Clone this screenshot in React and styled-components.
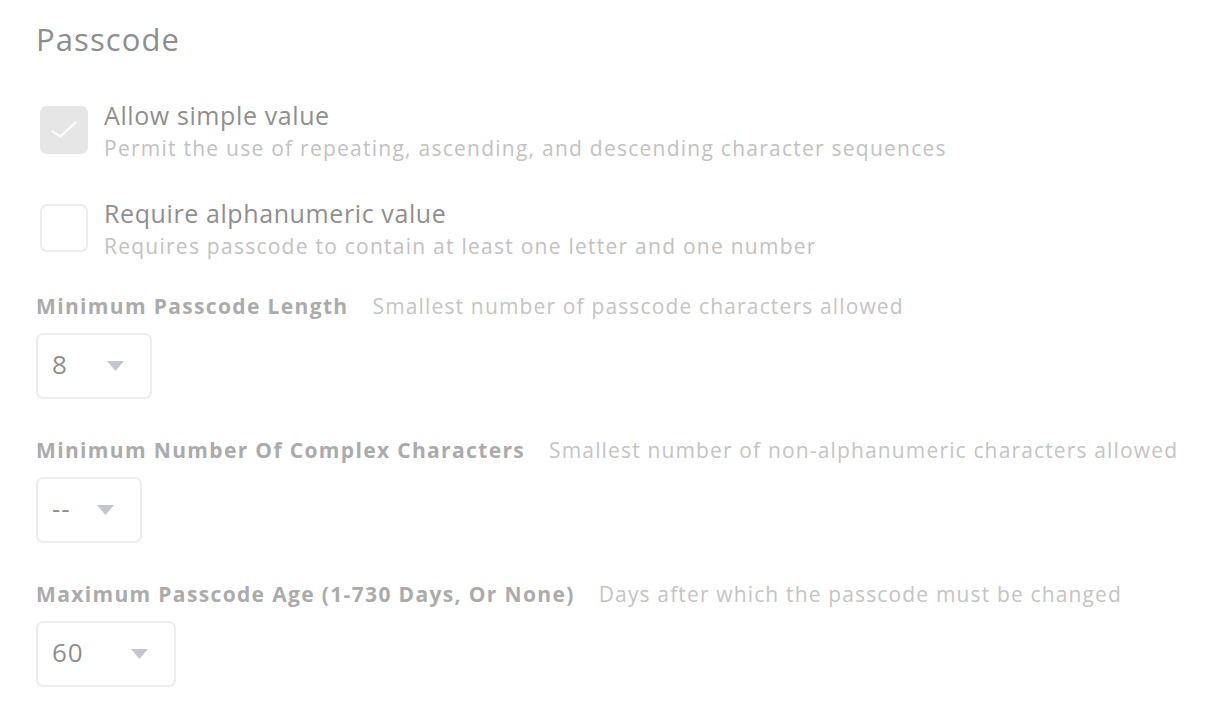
import React from 'react';
import styled, { createGlobalStyle } from 'styled-components';

const GlobalStyle = createGlobalStyle`
    body {
        margin: 0;
        background: #ffffff;
        font-family: "Open Sans", Lato, sans-serif;
    }
`;

const Page = styled.div`
    padding: 19px 36px 0;
    display: flex;
    flex-direction: column;
`;

const Title = styled.h2`
    margin: 0;
    font-size: 31px;
    line-height: 40px;
    font-weight: 400;
    color: #8e8e8e;
    letter-spacing: 1.1px;
`;

const CheckList = styled.div`
    margin-top: 47px;
    display: flex;
    flex-direction: column;
    gap: 50px;
`;

const CheckRow = styled.div`
    display: flex;
    align-items: flex-start;
    gap: 16px;
    padding-left: 4px;
    height: 48px;
`;

const Box = styled.div`
    width: 48px;
    height: 48px;
    box-sizing: border-box;
    border-radius: 7px;
    flex-shrink: 0;
    display: flex;
    align-items: center;
    justify-content: center;
    background: ${props => props.$checked ? '#e6e6e6' : '#ffffff'};
    border: ${props => props.$checked ? 'none' : '2px solid #ececec'};
`;

const CheckText = styled.div`
    margin-top: -6px;
    display: flex;
    flex-direction: column;
`;

const CheckLabel = styled.div`
    font-size: 25px;
    line-height: 30px;
    color: #8f8f8f;
    letter-spacing: 0.6px;
`;

const CheckDesc = styled.div`
    margin-top: 6px;
    font-size: 21px;
    line-height: 24px;
    color: #c2c2c2;
    letter-spacing: 1.25px;
`;

const Sections = styled.div`
    margin-top: 40px;
    display: flex;
    flex-direction: column;
    gap: 37px;
`;

const Section = styled.div`
    display: flex;
    flex-direction: column;
    align-items: flex-start;
    gap: 13px;
`;

const SectionHead = styled.div`
    display: flex;
    align-items: center;
    gap: 24px;
    height: 28px;
    white-space: nowrap;
`;

const SectionLabel = styled.span`
    font-size: 21px;
    font-weight: 700;
    color: #ababab;
    letter-spacing: 1.35px;
`;

const SectionDesc = styled.span`
    font-size: 21px;
    color: #c4c4c4;
    letter-spacing: 1.15px;
`;

const Select = styled.div`
    position: relative;
    box-sizing: border-box;
    width: ${props => props.$width}px;
    height: 66px;
    border: 2px solid #ededed;
    border-radius: 7px;
    display: flex;
    align-items: center;
    padding: 0 0 4px 14px;
`;

const SelectValue = styled.span`
    font-size: 26px;
    color: #8f8f8f;
    letter-spacing: 1px;
`;

const Arrow = styled.svg`
    position: absolute;
    right: 26px;
    top: 50%;
    margin-top: -5px;
`;

const Check = () => (
    <svg width="26" height="18" viewBox="0 0 26 18">
        <path d="M1.5 10.5 L9.5 15.5 L24.5 1.5" fill="none" stroke="#ffffff" strokeWidth="2" strokeLinecap="round" strokeLinejoin="round" />
    </svg>
);

const checks = [
    {
        label: 'Allow simple value',
        desc: 'Permit the use of repeating, ascending, and descending character sequences',
        checked: true,
    },
    {
        label: 'Require alphanumeric value',
        desc: 'Requires passcode to contain at least one letter and one number',
        checked: false,
    },
];

const fields = [
    {
        label: 'Minimum Passcode Length',
        desc: 'Smallest number of passcode characters allowed',
        value: '8',
        width: 116,
    },
    {
        label: 'Minimum Number Of Complex Characters',
        desc: 'Smallest number of non-alphanumeric characters allowed',
        value: '--',
        width: 106,
    },
    {
        label: 'Maximum Passcode Age (1-730 Days, Or None)',
        desc: 'Days after which the passcode must be changed',
        value: '60',
        width: 140,
    },
];

const App = () => {
    return (
        <>
            <GlobalStyle />
            <Page>
                <Title>Passcode</Title>

                <CheckList>
                    {checks.map(c => (
                        <CheckRow key={c.label}>
                            <Box $checked={c.checked}>
                                {c.checked && <Check />}
                            </Box>
                            <CheckText>
                                <CheckLabel>{c.label}</CheckLabel>
                                <CheckDesc>{c.desc}</CheckDesc>
                            </CheckText>
                        </CheckRow>
                    ))}
                </CheckList>

                <Sections>
                    {fields.map(f => (
                        <Section key={f.label}>
                            <SectionHead>
                                <SectionLabel>{f.label}</SectionLabel>
                                <SectionDesc>{f.desc}</SectionDesc>
                            </SectionHead>
                            <Select $width={f.width}>
                                <SelectValue>{f.value}</SelectValue>
                                <Arrow width="17" height="10" viewBox="0 0 17 10">
                                    <path d="M0 0 H17 L8.5 10 Z" fill="#c4c6ce" />
                                </Arrow>
                            </Select>
                        </Section>
                    ))}
                </Sections>
            </Page>
        </>
    );
};

export default App;
